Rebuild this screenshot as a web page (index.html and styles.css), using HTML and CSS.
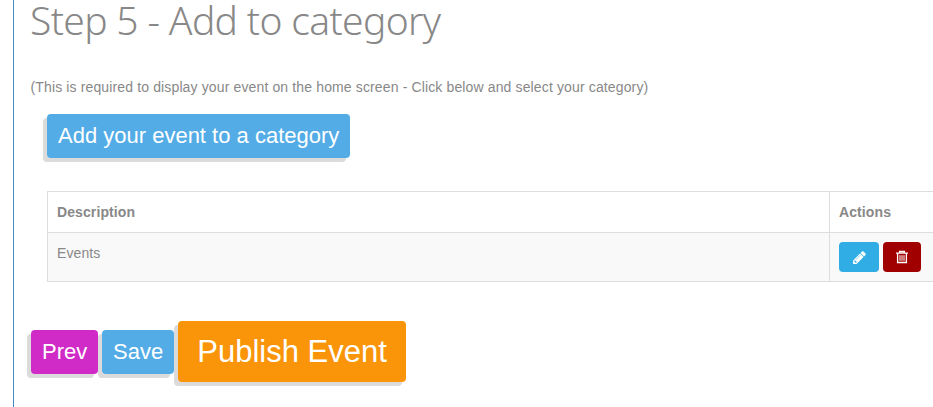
FILE: index.html
```html
<!DOCTYPE html>
<html>
<head>
    <meta charset="utf-8">
    <title>Add to category</title>
    <link rel="stylesheet" href="styles.css">
</head>
<body>
    <div class="step">
        <h1>Step 5 - Add to category</h1>
        <p class="hint">(This is required to display your event on the home screen - Click below and select your category)</p>

        <div class="category">
            <button class="btn btn-blue">Add your event to a category</button>
            <table class="table">
                <thead>
                    <tr>
                        <th class="description">Description</th>
                        <th>Actions</th>
                    </tr>
                </thead>
                <tbody>
                    <tr>
                        <td>Events</td>
                        <td>
                            <div class="actions">
                                <button class="btn-icon btn-edit" title="Edit">
                                    <svg width="15" height="15" viewBox="0 0 1792 1792" fill="#fff"><path d="M491 1536l91-91-235-235-91 91v107h128v128h107zm523-928q0-22-22-22-10 0-17 7l-542 542q-7 7-7 17 0 22 22 22 10 0 17-7l542-542q7-7 7-17zm-54-192l416 416-832 832h-416v-416zm683 96q0 53-37 90l-166 166-416-416 166-165q36-38 90-38 53 0 91 38l235 234q37 39 37 91z"/></svg>
                                </button>
                                <button class="btn-icon btn-delete" title="Delete">
                                    <svg width="14" height="14" viewBox="0 0 14 14" fill="none" stroke="#fff"><path stroke-width="1.3" d="M1 3.2h12M4.6 3V1.5h4.8V3M2.6 3.5v9h8.8v-9"/><path d="M5 5.2v5.6M7 5.2v5.6M9 5.2v5.6"/></svg>
                                </button>
                            </div>
                        </td>
                    </tr>
                </tbody>
            </table>
        </div>

        <div class="nav">
            <button class="btn btn-purple">Prev</button>
            <button class="btn btn-blue">Save</button>
            <button class="btn btn-publish">Publish Event</button>
        </div>
    </div>
</body>
</html>
```
FILE: styles.css
```css
* {
    box-sizing: border-box;
}
body {
    margin: 0;
    background: #fff;
    color: #888;
    font-family: "Liberation Sans", Arial, sans-serif;
    font-size: 14px;
    line-height: 20px;
}
.step {
    height: 407px;
    margin-left: 13px;
    padding-left: 17px;
    border-left: 1px solid #428bca;
}
h1 {
    margin: 0;
    height: 77px;
    font-family: "Noto Sans", sans-serif;
    font-weight: 300;
    font-size: 39px;
    line-height: 40px;
    letter-spacing: -0.65px;
    text-indent: -1px;
    white-space: nowrap;
}
.hint {
    margin: 0;
    letter-spacing: 0.135px;
    text-indent: -0.5px;
}
.category {
    margin-left: 16px;
    padding-top: 17px;
}
button {
    border: none;
    color: #fff;
    font-family: inherit;
    cursor: pointer;
}
.btn {
    height: 44px;
    padding: 0 11px 1px;
    border-radius: 4px;
    box-shadow: -4px 4px 0 #dbdbdb;
    font-size: 22px;
    line-height: 43px;
    white-space: nowrap;
}
.category .btn {
    display: block;
    width: 303px;
}
.btn-blue {
    background: #53ace6;
}
.btn-purple {
    width: 67px;
    background: #d02bc6;
}
.table {
    width: 100%;
    margin-top: 33px;
    border-collapse: collapse;
    table-layout: fixed;
}
.table th,
.table td {
    border: 1px solid #ddd;
    padding: 10px 9px 9px;
    text-align: left;
    vertical-align: top;
}
.table th:last-child,
.table td:last-child {
    border-right: none;
}
.table th {
    height: 41px;
    letter-spacing: 0.1px;
}
.table td {
    height: 49px;
    padding: 9px 9px 8px;
    background: #f9f9f9;
}
.table td:first-child {
    padding-top: 10px;
    letter-spacing: 0.1px;
}
.table .description {
    width: 782px;
}
.actions {
    display: flex;
    gap: 4px;
}
.btn-icon {
    display: flex;
    align-items: center;
    justify-content: center;
    height: 30px;
    padding: 0;
    border-radius: 4px;
}
.btn-edit {
    width: 40px;
    background: #31ade6;
}
.btn-delete {
    width: 38px;
    background: #a00000;
}
.nav {
    display: flex;
    align-items: center;
    gap: 4px;
    margin-top: 39px;
}
.nav .btn-blue {
    width: 72px;
}
.nav .btn-publish {
    width: 228px;
    height: 61px;
    padding-bottom: 0;
    background: #fa9409;
    font-size: 31px;
    line-height: 61px;
}
```
